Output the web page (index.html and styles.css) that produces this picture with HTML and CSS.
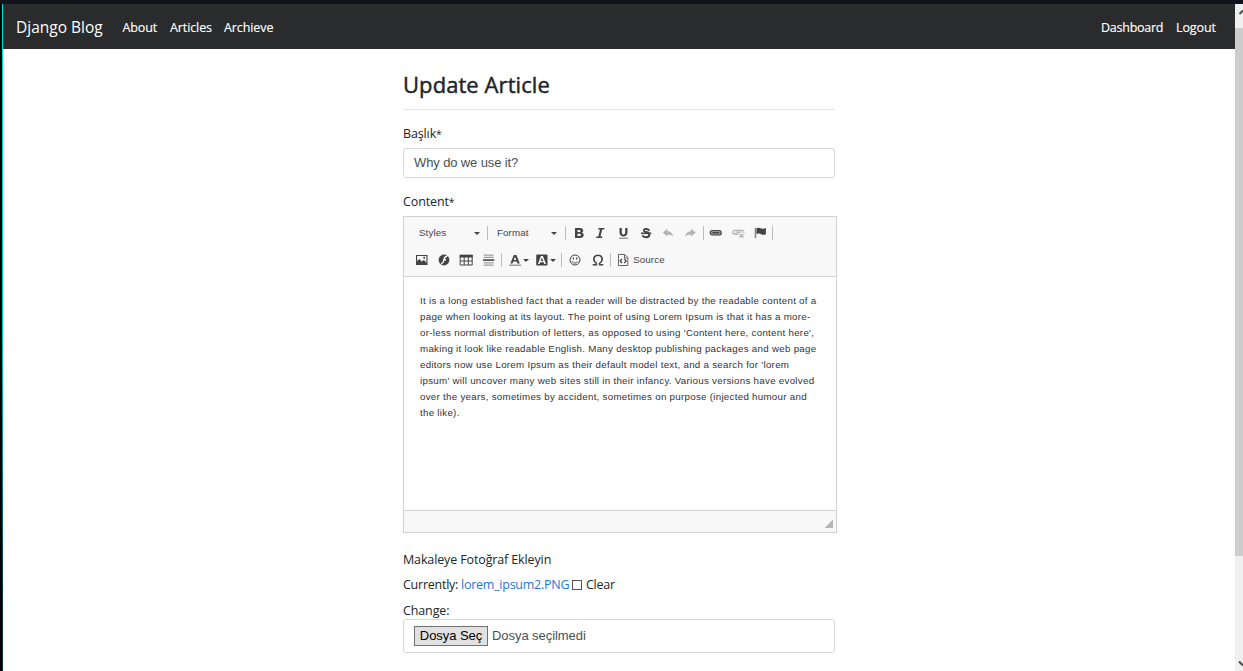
FILE: index.html
```html
<!DOCTYPE html>
<html lang="tr">
<head>
<meta charset="utf-8">
<title>Update Article</title>
<link rel="stylesheet" href="styles.css">
</head>
<body>
<div class="edge"></div>
<div class="window">
  <nav class="navbar">
    <a class="brand">Django Blog</a>
    <a class="nav-link about">About</a>
    <a class="nav-link articles">Articles</a>
    <a class="nav-link archive">Archieve</a>
    <a class="nav-link dashboard">Dashboard</a>
    <a class="nav-link logout">Logout</a>
  </nav>
  <main class="form">
    <h1><span>Update Article</span></h1>
    <label class="label title-label"><span>Başlık</span><span class="star">*</span></label>
    <div class="input"><span>Why do we use it?</span></div>
    <label class="label content-label"><span>Content</span><span class="star">*</span></label>
    <section class="editor">
      <div class="toolbar">
        <div class="row">
          <span class="combo styles"><span>Styles</span><i class="caret"></i></span>
          <i class="sep"></i>
          <span class="combo format"><span>Format</span><i class="caret"></i></span>
          <i class="sep gap"></i>
          <svg class="btn" viewBox="0 0 16 16"><path fill-rule="evenodd" d="M4 3h5c2 0 3.200.9 3.200 2.600 0 1-.5 1.800-1.500 2.100 1.300.3 2 1.200 2 2.400 0 1.900-1.400 2.900-3.500 2.900H4zm2.500 2v2H8.400c1.600 0 1.600-2 0-2zm0 3.800V11h2.200c1.800 0 1.800-2.200 0-2.200z"/></svg>
          <svg class="btn italic" viewBox="0 0 16 16"><path d="M5.500 3h6l-.4 1.500h-1.900L7.500 11.500h1.900L9 13H3l.4-1.500h1.900l1.700-7H5.100z"/></svg>
          <svg class="btn" viewBox="0 0 16 16"><path d="M4.500 3h2.300v4.500c0 2.700 3.400 2.700 3.400 0V3h2.300v4.500c0 5.300-8 5.300-8 0z"/><path opacity=".5" d="M4 12.500h9V14H4z"/></svg>
          <svg class="btn" viewBox="0 0 16 16"><path d="M11.400 5.600C9.500 3.300 5.200 3.700 6 6c.6 1.500 5.300.7 5.300 3.700 0 3.300-5.600 3-7 .8" fill="none" stroke="#444" stroke-width="2"/><path d="M3 7.500h10.300v1.600H3z"/></svg>
          <svg class="btn off" viewBox="0 0 16 16"><path d="M2.800 7.500 7.400 3.800v2.400c3.300 0 5.400 2 5.800 5.800-1.500-2-3-2.600-5.800-2.600v2z"/></svg>
          <svg class="btn off" viewBox="0 0 16 16"><path d="M13.700 7.500 9.100 3.800v2.400c-3.300 0-5.400 2-5.800 5.800 1.500-2 3-2.600 5.800-2.600v2z"/></svg>
          <i class="sep gap"></i>
          <svg class="btn" viewBox="0 0 16 16"><rect x="2.200" y="5.500" width="11" height="4.500" rx="2" fill="#999" stroke="#444" stroke-width="1.200"/><path d="M4.500 7h6.500v1.400H4.500z"/></svg>
          <svg class="btn off" viewBox="0 0 16 16"><path fill="none" stroke="#444" stroke-width="1.300" d="M7.500 9H3.500Q1.800 9 1.800 7.200t1.700-1.900h7.700q1.700 0 1.700 1.900v.8M4.500 7.200h6M8.500 9l4 3.600M12.500 9l-4 3.600"/></svg>
          <svg class="btn" viewBox="0 0 16 16"><path d="M1.700 3h1.500v10H1.700z" opacity=".65"/><path d="M3.500 3.300c3-1.300 4.500.8 6.500.4 1-.1 1.700-.3 2.900-.7v6.200c-2.700 1.200-4.300.2-5.900-.5-1-.4-2.200-.2-3.500.3z"/></svg>
          <i class="sep"></i>
        </div>
        <div class="row second">
          <svg class="btn" viewBox="0 0 16 16"><path fill-rule="evenodd" d="M2 3h11.500v10H2zM3.100 4.100v5L5.500 7l2 2.500L10 8l2.400 2.700V4.100z"/><circle cx="10.200" cy="5.700" r="1"/></svg>
          <svg class="btn" viewBox="0 0 16 16"><circle cx="8" cy="8" r="5.400"/><path d="M11.300 4.300C8 4.500 8 7 7.600 8.800 7.200 10.500 6.500 11.500 5 11.800M7.500 7.800h2.600" fill="none" stroke="#fff" stroke-width="1.400"/></svg>
          <svg class="btn" viewBox="0 0 16 16"><path d="M1.700 2.800h13v2.700h-13z"/><path d="M2.200 3.300h12v9.700h-12zM2.200 9h12M6.200 5v8M10.300 5v8" fill="none" stroke="#444"/></svg>
          <svg class="btn" viewBox="0 0 16 16"><path d="M2 7.300h11.300v1.600H2z"/><path opacity=".5" d="M2.700 2.500h10v1.200h-10zm0 2.300h10V6h-10zm0 5.500h10v1.200h-10zm0 2.300h10v1.200h-10z"/></svg>
          <i class="sep gap rule-end"></i>
          <span class="color"><svg viewBox="0 0 16 16"><path fill-rule="evenodd" d="M6.800 3h2.600l3.400 8.500h-2.300l-.7-2H6.200l-.7 2H3.400zm-.1 5h2.600L8 4.800z"/><path opacity=".5" d="M2.200 12.500h12v1.400h-12z"/></svg><i class="caret"></i></span>
          <span class="color bg"><svg viewBox="0 0 16 16"><rect x="2.200" y="2.500" width="11.300" height="11" rx="1"/><path fill="#fff" fill-rule="evenodd" d="M6.900 4h2l3 8h-1.700l-.6-1.700H6.200L5.600 12H4zm-.3 5.100h2.600L7.900 5.400z"/></svg><i class="caret"></i></span>
          <i class="sep gap"></i>
          <svg class="btn smile" viewBox="0 0 16 16"><circle cx="8" cy="8" r="5" fill="none" stroke="#444"/><path d="M5.700 5.500h1.300v2H5.700zm3.300 0h1.300v2H9z"/><path d="M5 9.200c1 2.400 5 2.400 6 0" fill="none" stroke="#444"/></svg>
          <svg class="btn" viewBox="0 0 16 16"><path d="M2.700 12.700h3.700V11.300C2.300 8.500 3.500 3.300 8 3.300s5.700 5.200 1.600 8v1.400h3.700" fill="none" stroke="#444" stroke-width="1.600"/></svg>
          <i class="sep gap"></i>
          <span class="source"><svg viewBox="0 0 16 16"><path d="M3.500 2.500h6.300l3 3v8H3.500zM9.500 3v3H12.500" fill="none" stroke="#666"/><path d="M7 6.800 5.200 8.900 7 11M9.300 6.800l1.800 2.100L9.300 11" fill="none" stroke="#444" stroke-width="1.300"/></svg><span>Source</span></span>
        </div>
      </div>
      <div class="content">
        <p>It is a long established fact that a reader will be distracted by the readable content of a</p>
        <p>page when looking at its layout. The point of using Lorem Ipsum is that it has a more-</p>
        <p>or-less normal distribution of letters, as opposed to using 'Content here, content here',</p>
        <p>making it look like readable English. Many desktop publishing packages and web page</p>
        <p>editors now use Lorem Ipsum as their default model text, and a search for 'lorem</p>
        <p>ipsum' will uncover many web sites still in their infancy. Various versions have evolved</p>
        <p>over the years, sometimes by accident, sometimes on purpose (injected humour and</p>
        <p>the like).</p>
      </div>
      <div class="bottom"><i class="grip"></i></div>
    </section>
    <div class="label photo-label"><span>Makaleye Fotoğraf Ekleyin</span></div>
    <div class="current"><span class="cur">Currently:</span><a>lorem_ipsum2.PNG</a><i class="check"></i><span class="clear">Clear</span></div>
    <div class="change"><span>Change:</span></div>
    <div class="file"><span class="choose">Dosya Seç</span><span class="none">Dosya seçilmedi</span></div>
  </main>
</div>
<div class="scrollbar">
  <svg class="arrow" viewBox="0 0 8 24"><path d="M4.500 10 8 6.500" fill="none" stroke="#505050" stroke-width="2.200"/></svg>
  <div class="thumb"></div>
  <svg class="arrow end" viewBox="0 0 8 24"><path d="M4 14.500 8 18.500" fill="none" stroke="#505050" stroke-width="2.200"/></svg>
</div>
</body>
</html>
```
FILE: styles.css
```css
* { box-sizing: border-box; }
body {
  margin: 0;
  height: 671px;
  display: flex;
  overflow: hidden;
  border-top: 4px solid #12121a;
  background: #fff;
  color: #212529;
  font: 13px/20px "Open Sans", "Noto Sans", sans-serif;
}
i { display: block; flex: none; }
p { margin: 0; }
span, a { white-space: nowrap; }
.edge { width: 3px; margin-top: -4px; background: linear-gradient(#00d9d9, #00c4c8 50%, #082e36 90%) right / 1px 100% no-repeat #020306; }
.window { width: 1232px; }
.navbar { height: 45px; display: flex; align-items: center; padding: 2px 19px 0 13px; background: #2a2b2d; color: #fff; font-size: 12.5px; letter-spacing: -.1px; -webkit-text-stroke: .15px; }
.brand { width: 106.500px; margin-top: -2px; font-size: 15.500px; letter-spacing: 0; -webkit-text-stroke: 0; }
.about { width: 47.500px; }
.articles { width: 54px; }
.dashboard { margin-left: auto; width: 75px; letter-spacing: -.25px; }
.logout { width: 40px; }
.form { width: 434px; margin-left: 400px; }
h1 { margin: 0; width: 432px; height: 61px; padding-top: 20px; border-bottom: 1px solid #e5e5e5; font-size: 22px; line-height: 30px; font-weight: 500; letter-spacing: .07px; -webkit-text-stroke: .45px; }
.label { display: block; font-size: 12.5px; height: 20px; letter-spacing: -.13px; }
.star { font-size: 10.500px; }
.title-label { margin-top: 14px; }
.input { width: 432px; height: 30px; margin-top: 4px; padding: 4px 10px; border: 1px solid #d4d6d8; border-radius: 3px; color: #495057; font: 13px/20px "Liberation Sans", sans-serif; letter-spacing: -.12px; }
.content-label { margin-top: 14px; }
.editor { width: 434px; height: 317px; margin-top: 4px; border: 1px solid #d1d1d1; display: flex; flex-direction: column; font-family: "Liberation Sans", sans-serif; }
.toolbar { height: 60px; background: #f8f8f8; border-bottom: 1px solid #d1d1d1; padding: 7px 0 0 7px; color: #444; font-size: 9.750px; }
.toolbar span span { letter-spacing: .1px; }
.row { display: flex; align-items: center; height: 18px; }
.second { margin: 8.500px 0 0 -.7px; }
.sep { width: 1px; height: 14px; background: #bcbcbc; }
.sep.gap { margin: 0 1.200px; }
.row .sep.gap:first-of-type { margin-left: 0; }
.second .rule-end.sep.gap { margin-left: 1.400px; }
.combo { display: flex; align-items: center; justify-content: space-between; padding-right: 7px; }
.styles { width: 76px; padding-left: 8px; }
.format { width: 76px; padding-left: 9px; }
.caret { border: 3px solid transparent; border-top: 3px solid #444; border-bottom: 0; margin-top: 1px; }
svg { display: block; flex: none; width: 16px; height: 16px; fill: #444; }
.btn { margin: 0 3.200px; }
.off { opacity: .38; }
.color { display: flex; align-items: center; width: 28px; padding-left: 4px; }
.bg { padding-left: 3px; }
.row .smile { margin-left: 4.500px; }
.source { display: flex; align-items: center; padding-left: 3px; gap: 2px; }
.content { flex: 1; padding: 16px; background: #fff; color: #333; font-size: 9.750px; line-height: 16px; letter-spacing: .277px; white-space: nowrap; }
.bottom { height: 22px; border-top: 1px solid #d1d1d1; background: #f8f8f8; display: flex; justify-content: flex-end; align-items: flex-end; padding: 4px 3px; }
.grip { width: 8px; height: 8px; background: linear-gradient(135deg, transparent 50%, #b5b5b5 50%); }
.photo-label { margin-top: 17px; }
.current { display: flex; align-items: center; height: 20px; margin-top: 5px; font-size: 12.5px; letter-spacing: -.25px; }
.current .cur { width: 58px; }
.current a { width: 108px; color: #2577d4; }
.check { width: 10px; height: 10px; margin: 0 4px 0 3px; border: 1px solid #555; }
.change { height: 20px; margin-top: 6px; font-size: 12.5px; letter-spacing: -.13px; }
.file { width: 432px; height: 34px; margin-top: -2px; padding: 0 10px; border: 1px solid #d4d6d8; border-radius: 3px; display: flex; align-items: center; gap: 4px; font: 13px/17px "Liberation Sans", sans-serif; color: #495057; letter-spacing: -.06px; }
.choose { width: 74px; height: 20px; border: 1px solid #707070; background: #e1e1e1; color: #000; text-align: center; line-height: 18px; }
.none { margin-top: -2px; }
.scrollbar { width: 8px; background: #f0f0f0; display: flex; flex-direction: column; }
.thumb { height: 528px; background: #cdcdcd; }
.arrow { width: 8px; height: 24px; }
.end { margin-top: auto; }
```
